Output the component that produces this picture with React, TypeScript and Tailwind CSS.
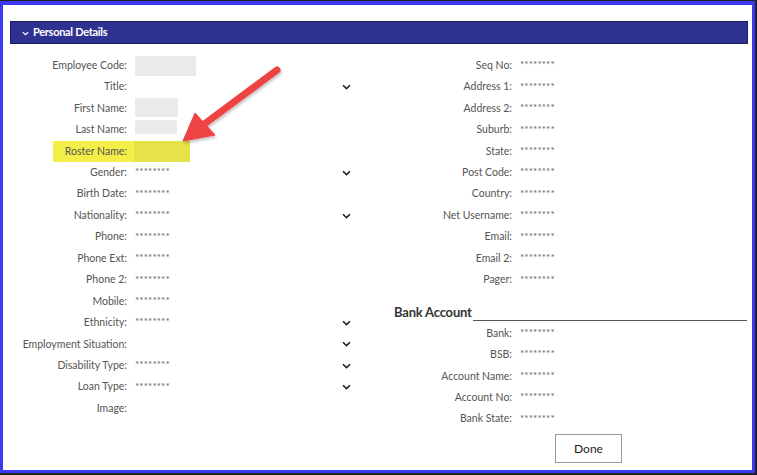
import React from "react";

type Field = { label: string; value?: "mask" | "blank" | "box"; select?: boolean; box?: string };

const leftFields: Field[] = [
  { label: "Employee Code:", value: "box", box: "w-[61px] h-[20px]" },
  { label: "Title:", value: "blank", select: true },
  { label: "First Name:", value: "box", box: "w-[43px] h-[19px] mt-[-2px]" },
  { label: "Last Name:", value: "box", box: "w-[42px] h-[14px] mt-[-6px]" },
  { label: "Roster Name:" },
  { label: "Gender:", value: "mask", select: true },
  { label: "Birth Date:", value: "mask" },
  { label: "Nationality:", value: "mask", select: true },
  { label: "Phone:", value: "mask" },
  { label: "Phone Ext:", value: "mask" },
  { label: "Phone 2:", value: "mask" },
  { label: "Mobile:", value: "mask" },
  { label: "Ethnicity:", value: "mask", select: true },
  { label: "Employment Situation:", value: "blank", select: true },
  { label: "Disability Type:", value: "mask", select: true },
  { label: "Loan Type:", value: "mask", select: true },
  { label: "Image:", value: "blank" },
];

const contactFields = [
  "Seq No:",
  "Address 1:",
  "Address 2:",
  "Suburb:",
  "State:",
  "Post Code:",
  "Country:",
  "Net Username:",
  "Email:",
  "Email 2:",
  "Pager:",
];

const bankFields = ["Bank:", "BSB:", "Account Name:", "Account No:", "Bank State:"];

const Chevron = ({ className = "" }: { className?: string }) => (
  <svg width="9" height="6" viewBox="0 0 9 6" className={className}>
    <path d="M1 1.2 L4.5 4.6 L8 1.2" fill="none" stroke="currentColor" strokeWidth="1.6" />
  </svg>
);

const Mask = () => (
  <span className="text-[10px] leading-none tracking-[0.1px] text-[#666] mt-[-3px]">********</span>
);

function Row({ field }: { field: Field }) {
  if (field.label === "Roster Name:") {
    return (
      <div className="flex h-[21.45px] items-stretch">
        <div className="w-[125px] flex justify-end">
          <span className="bg-[#f3ef48] pl-[12px] pr-[8px] flex items-center">{field.label}</span>
        </div>
        <div className="w-[56px] bg-[#e6e24a] ml-[-1px]" />
      </div>
    );
  }
  return (
    <div className="flex h-[21.45px] items-center">
      <div className="w-[125px] pr-[8px] text-right whitespace-nowrap">{field.label}</div>
      <div className="flex-1 flex items-center justify-between">
        {field.value === "mask" && <Mask />}
        {field.value === "box" && <div className={`bg-[#ebebeb] ${field.box}`} />}
        {field.value === "blank" && <span />}
        {field.select && <Chevron className="text-[#222]" />}
      </div>
    </div>
  );
}

function MaskRow({ label }: { label: string }) {
  return (
    <div className="flex h-[21.45px] items-center">
      <div className="w-[125px] pr-[8px] text-right whitespace-nowrap">{label}</div>
      <Mask />
    </div>
  );
}

export default function App() {
  return (
    <div
      className="w-[757px] h-[475px] bg-[#1f1f24] pt-px pr-[2px] pb-[2px]"
      style={{ fontFamily: "Lato, 'Open Sans', sans-serif" }}
    >
      <div className="relative h-full bg-white border-[#3a3af2] border-t-[4px] border-l-[3px] border-r-[3px] border-b-[3px] pt-[16px] pl-[7px] pr-[4px]">
        {/* section header */}
        <div className="h-[23px] bg-[#2f3190] border border-[#1d1e5e] flex items-center pl-[11px] gap-[4px] text-white">
          <Chevron className="text-white w-[7px] h-[5px] mt-[1px]" />
          <span className="text-[11px] font-bold tracking-[-0.3px]">Personal Details</span>
        </div>

        <div className="flex mt-[11px] text-[10.5px] text-[#555]">
          {/* personal column */}
          <div className="w-[341px]">
            {leftFields.map((f) => (
              <Row key={f.label} field={f} />
            ))}
          </div>

          {/* contact + bank column */}
          <div className="ml-[44px] flex-1 pr-[1px]">
            {contactFields.map((l) => (
              <MaskRow key={l} label={l} />
            ))}
            <div className="h-[32px] flex items-end pb-[4px] ml-[-1px]">
              <span className="text-[13px] font-bold text-[#333] leading-none tracking-[-0.2px]">Bank Account</span>
              <div className="flex-1 h-px bg-[#555] ml-[1px] mb-[-2px]" />
            </div>
            {bankFields.map((l) => (
              <MaskRow key={l} label={l} />
            ))}
            <button className="ml-[160px] mt-[4px] w-[67px] h-[29px] border border-[#9a9a9a] bg-white text-[12px] text-[#222]">
              Done
            </button>
          </div>
        </div>

        {/* pointer arrow */}
        <svg
          className="absolute left-0 top-0 pointer-events-none"
          width="750"
          height="466"
          viewBox="0 0 750 466"
        >
          <defs>
            <filter id="arrowShadow" x="-20%" y="-20%" width="140%" height="140%">
              <feDropShadow dx="1" dy="2" stdDeviation="1.5" floodColor="#000" floodOpacity="0.25" />
            </filter>
          </defs>
          <g filter="url(#arrowShadow)" fill="#ef4343" stroke="#ef4343">
            <line x1="274" y1="65" x2="200" y2="120" strokeWidth="7" strokeLinecap="round" />
            <polygon points="180,136 192,108 212,130" strokeWidth="1" strokeLinejoin="round" />
          </g>
        </svg>
      </div>
    </div>
  );
}
